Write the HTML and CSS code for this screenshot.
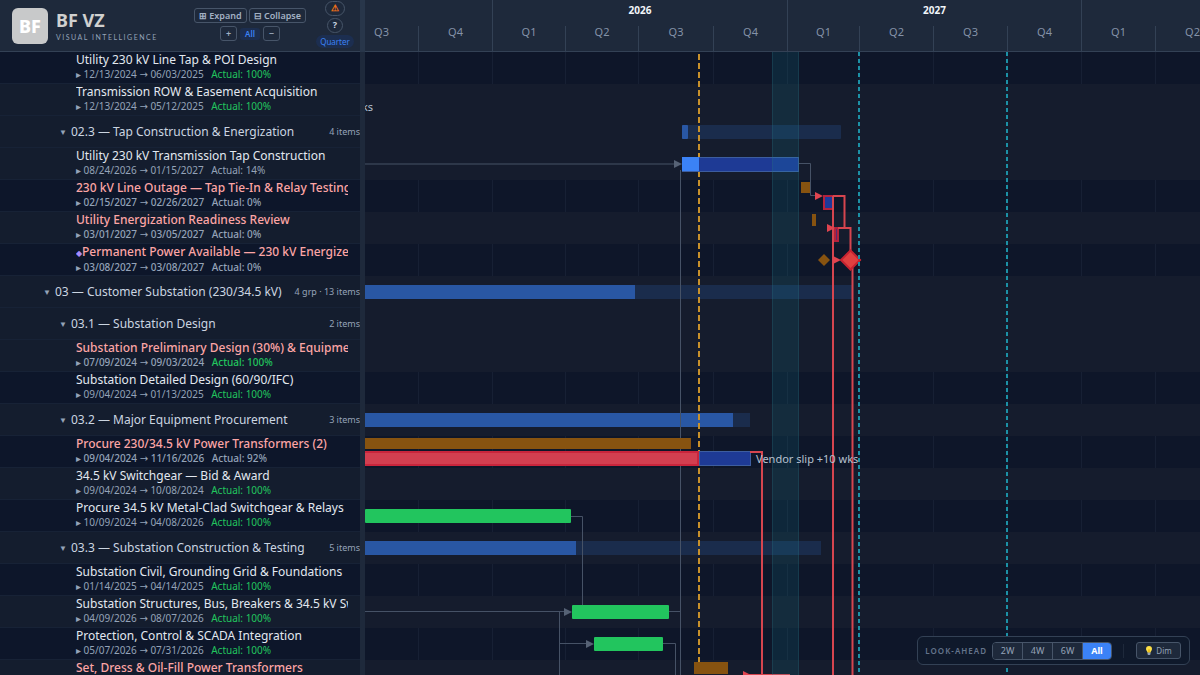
FILE: index.html
```html
<!DOCTYPE html>
<html lang="en">
<head>
<meta charset="utf-8">
<title>BF VZ</title>
<link rel="stylesheet" href="styles.css">
</head>
<body>
<div class="app">
  <aside class="sidebar">
    <header class="brand-bar">
      <div class="logo">BF</div>
      <div class="brand">
        <div class="brand-name">BF VZ</div>
        <div class="brand-tag">VISUAL INTELLIGENCE</div>
      </div>
      <div class="tree-tools">
        <div class="tool-line">
          <button class="tool">⊞ Expand</button>
          <button class="tool">⊟ Collapse</button>
        </div>
        <div class="tool-line steps">
          <button class="tool step">+</button>
          <span class="level">All</span>
          <button class="tool step">−</button>
        </div>
      </div>
      <div class="view-tools">
        <button class="round warn" aria-label="Warnings">⚠</button>
        <button class="round help">?</button>
        <button class="zoom-level">Quarter</button>
      </div>
    </header>
    <div class="rows">
      <div class="row"><div class="title">Utility 230 kV Line Tap &amp; POI Design</div><div class="dates">▸ 12/13/2024 <span class="to">→</span> 06/03/2025 <span class="actual done">Actual: 100%</span></div></div>
      <div class="row alt"><div class="title">Transmission ROW &amp; Easement Acquisition</div><div class="dates">▸ 12/13/2024 <span class="to">→</span> 05/12/2025 <span class="actual done">Actual: 100%</span></div></div>
      <div class="row alt group sub"><span class="caret">▼</span><span class="name">02.3 — Tap Construction &amp; Energization</span><span class="count">4 items</span></div>
      <div class="row alt"><div class="title">Utility 230 kV Transmission Tap Construction</div><div class="dates">▸ 08/24/2026 <span class="to">→</span> 01/15/2027 <span class="actual">Actual: 14%</span></div></div>
      <div class="row critical"><div class="title">230 kV Line Outage — Tap Tie-In &amp; Relay Testing</div><div class="dates">▸ 02/15/2027 <span class="to">→</span> 02/26/2027 <span class="actual">Actual: 0%</span></div></div>
      <div class="row alt critical"><div class="title">Utility Energization Readiness Review</div><div class="dates">▸ 03/01/2027 <span class="to">→</span> 03/05/2027 <span class="actual">Actual: 0%</span></div></div>
      <div class="row critical"><div class="title"><span class="milestone">◆</span>Permanent Power Available — 230 kV Energized</div><div class="dates">▸ 03/08/2027 <span class="to">→</span> 03/08/2027 <span class="actual">Actual: 0%</span></div></div>
      <div class="row alt group"><span class="caret">▼</span><span class="name">03 — Customer Substation (230/34.5 kV)</span><span class="count">4 grp · 13 items</span></div>
      <div class="row alt group sub"><span class="caret">▼</span><span class="name">03.1 — Substation Design</span><span class="count">2 items</span></div>
      <div class="row alt critical"><div class="title">Substation Preliminary Design (30%) &amp; Equipment</div><div class="dates">▸ 07/09/2024 <span class="to">→</span> 09/03/2024 <span class="actual done">Actual: 100%</span></div></div>
      <div class="row"><div class="title">Substation Detailed Design (60/90/IFC)</div><div class="dates">▸ 09/04/2024 <span class="to">→</span> 01/13/2025 <span class="actual done">Actual: 100%</span></div></div>
      <div class="row alt group sub"><span class="caret">▼</span><span class="name">03.2 — Major Equipment Procurement</span><span class="count">3 items</span></div>
      <div class="row critical"><div class="title">Procure 230/34.5 kV Power Transformers (2)</div><div class="dates">▸ 09/04/2024 <span class="to">→</span> 11/16/2026 <span class="actual">Actual: 92%</span></div></div>
      <div class="row alt"><div class="title">34.5 kV Switchgear — Bid &amp; Award</div><div class="dates">▸ 09/04/2024 <span class="to">→</span> 10/08/2024 <span class="actual done">Actual: 100%</span></div></div>
      <div class="row"><div class="title">Procure 34.5 kV Metal-Clad Switchgear &amp; Relays</div><div class="dates">▸ 10/09/2024 <span class="to">→</span> 04/08/2026 <span class="actual done">Actual: 100%</span></div></div>
      <div class="row alt group sub"><span class="caret">▼</span><span class="name">03.3 — Substation Construction &amp; Testing</span><span class="count">5 items</span></div>
      <div class="row"><div class="title">Substation Civil, Grounding Grid &amp; Foundations</div><div class="dates">▸ 01/14/2025 <span class="to">→</span> 04/14/2025 <span class="actual done">Actual: 100%</span></div></div>
      <div class="row alt"><div class="title">Substation Structures, Bus, Breakers &amp; 34.5 kV Switchgear</div><div class="dates">▸ 04/09/2026 <span class="to">→</span> 08/07/2026 <span class="actual done">Actual: 100%</span></div></div>
      <div class="row"><div class="title">Protection, Control &amp; SCADA Integration</div><div class="dates">▸ 05/07/2026 <span class="to">→</span> 07/31/2026 <span class="actual done">Actual: 100%</span></div></div>
      <div class="row alt critical"><div class="title">Set, Dress &amp; Oil-Fill Power Transformers</div></div>
    </div>
  </aside>
  <div class="splitter"></div>
  <main class="timeline">
    <header class="scale">
      <div class="years">
        <div class="y25"></div><div class="y26">2026</div><div class="y27">2027</div><div class="y28"></div>
      </div>
      <div class="quarters">
        <div>Q3</div><div class="year-end">Q4</div><div>Q1</div><div>Q2</div><div>Q3</div><div class="year-end">Q4</div><div>Q1</div><div>Q2</div><div>Q3</div><div class="year-end">Q4</div><div>Q1</div><div>Q2</div>
      </div>
    </header>
    <svg class="chart">
      <g transform="translate(-365 -52)">
        <path class="grid" d="M418.5 52V700M492.5 52V700M565.5 52V700M638.5 52V700M713.5 52V700M787.5 52V700M859.5 52V700M933.5 52V700M1007.5 52V700M1081.5 52V700M1155.5 52V700"/>
        <g class="stripe">
          <rect x="365" y="84" width="100%" height="96"/>
          <rect x="365" y="212" width="100%" height="32"/>
          <rect x="365" y="276" width="100%" height="96"/>
          <rect x="365" y="404" width="100%" height="32"/>
          <rect x="365" y="468" width="100%" height="32"/>
          <rect x="365" y="532" width="100%" height="32"/>
          <rect x="365" y="596" width="100%" height="32"/>
          <rect x="365" y="660" width="100%" height="32"/>
        </g>
        <g class="summary">
          <rect x="682" y="125" width="159" height="14" rx="1"/>
          <rect x="365" y="285" width="488" height="14"/>
          <rect x="365" y="413" width="385" height="14"/>
          <rect x="365" y="541" width="456" height="14"/>
        </g>
        <g class="summary-done">
          <rect x="682" y="125" width="6" height="14" rx="1"/>
          <rect x="365" y="285" width="270" height="14"/>
          <rect x="365" y="413" width="368" height="14"/>
          <rect x="365" y="541" width="211" height="14"/>
        </g>
        <path class="link" d="M365 164H674M680.500 170V700M799 163.500H810.500V195.500H816M571 516.500H582.500V605M365 611.500H565M559.500 700V611.500M559.500 643.500H588M668 611.500H680.500M663 643.500H675.500V700"/>
        <path class="link-head" d="M674 160l8 4-8 4zM564 608l8 4-8 4zM586 640l8 4-8 4z"/>
        <path class="today" d="M699 54V700"/>
        <g class="baseline">
          <rect x="801" y="182" width="9" height="11"/>
          <rect x="812" y="214" width="4" height="12"/>
          <path d="M824 254l6 6-6 6-6-6z"/>
          <rect x="365" y="438" width="326" height="11"/>
          <rect x="694" y="662" width="34" height="12"/>
        </g>
        <rect class="task" x="682.500" y="157.500" width="116" height="14"/>
        <rect class="task-done" x="682" y="157" width="17" height="14"/>
        <rect class="task" x="699.500" y="451.500" width="51" height="14"/>
        <rect class="critical-done" x="355" y="452" width="343" height="13"/>
        <g class="finished">
          <rect x="365" y="509" width="206" height="14" rx="1"/>
          <rect x="572" y="605" width="97" height="14" rx="1"/>
          <rect x="594" y="637" width="69" height="14" rx="1"/>
        </g>
        <rect class="critical-task" x="824" y="196" width="9" height="13"/>
        <rect class="critical-task short" x="835" y="228" width="3" height="13"/>
        <path class="critical-link" d="M833 196H844.500V228H838M838 228H850.500V252M833 196V700M852.500 268V700M750 452H762V700M745 675H790"/>
        <path class="critical-head" d="M815 192l8 4-8 4zM827 224l8 4-8 4zM833 256l8 4-8 4zM743 671l8 4-8 4zM858 257l3 3-3 3z"/>
        <path class="critical-milestone" d="M850.500 250.500l9.500 9.500-9.500 9.500-9.500-9.500z"/>
        <rect class="band" x="772" y="52" width="27" height="660"/>
        <path class="band-edge" d="M772.500 52V700M798.500 52V700"/>
        <path class="deadline" d="M859 52V700M1007 52V700"/>
        <text class="note" x="362" y="111">ks</text>
        <text class="note" x="756" y="463">Vendor slip +10 wks</text>
      </g>
    </svg>
  </main>
  <div class="lookahead">
    <span class="lookahead-label">LOOK-AHEAD</span>
    <div class="segments">
      <button>2W</button><button>4W</button><button>6W</button><button class="active">All</button>
    </div>
    <span class="divider"></span>
    <button class="dim"><svg class="bulb" viewBox="0 0 10 12"><path d="M5 0a4 4 0 0 0-4 4c0 2 2 3 2 5h4c0-2 2-3 2-5a4 4 0 0 0-4-4z" fill="#fde047"/><path d="M4 4l1 1 1-1v4H4z" fill="#eab308"/><path d="M3 9h4v2L6 12H4L3 11z" fill="#94a3b8"/></svg>Dim</button>
  </div>
</div>
</body>
</html>
```
FILE: styles.css
```css
* { box-sizing: border-box; }

body {
  margin: 0;
  background: #0e1629;
  color: #e2e8f0;
  font-family: "Noto Sans", "Open Sans", sans-serif;
}

button {
  margin: 0;
  padding: 0;
  font-family: inherit;
  cursor: pointer;
}

.app {
  position: relative;
  display: flex;
  height: 100vh;
  overflow: hidden;
}

.sidebar {
  flex: none;
  width: 360px;
  background: #0d162a;
}

.splitter {
  flex: none;
  width: 5px;
  background: linear-gradient(#28364a 52px, #1e293b 52px);
}

.timeline {
  flex: 1;
  min-width: 0;
  display: flex;
  flex-direction: column;
}

/* Brand bar */
.brand-bar {
  display: flex;
  align-items: center;
  height: 52px;
  padding-left: 12px;
  background: #1e293b;
  border-bottom: 1px solid #334155;
}

.logo {
  display: grid;
  place-items: center;
  width: 36px;
  height: 36px;
  border-radius: 6px;
  background: #c8c9ca;
  color: #fff;
  font-size: 18px;
  font-weight: 800;
}

.brand { flex: 1; padding-left: 8px; }

.brand-name {
  color: #d0d0cf;
  font-size: 18px;
  font-weight: 700;
  line-height: 22px;
}

.brand-tag {
  color: #94a3b8;
  font-family: Lato, sans-serif;
  font-size: 7px;
  letter-spacing: 1.5px;
  line-height: 12px;
}

.tree-tools {
  display: flex;
  flex-direction: column;
  align-items: center;
  gap: 3px;
  padding-bottom: 2px;
}

.tool-line { display: flex; align-items: center; gap: 2px; }
.steps { gap: 3px; }

.tool {
  height: 15px;
  padding: 0 4px;
  border: 1px solid #475569;
  border-radius: 3px;
  background: #1e293b;
  color: #a3b1c4;
  font-size: 9px;
  font-weight: 600;
  line-height: 12px;
}

.tool.step { width: 17px; padding: 0; }

.level {
  padding: 0 5px;
  border-radius: 3px;
  background: #1c2e50;
  color: #3b82f6;
  font-size: 8px;
  font-weight: 600;
  line-height: 12px;
}

.view-tools {
  display: flex;
  flex-direction: column;
  align-items: center;
  gap: 2px;
  width: 40px;
  padding-bottom: 3px;
  margin: 0 5px 0 9px;
}

.round {
  height: 15px;
  border: 1px solid #475569;
  border-radius: 8px;
  background: #1e293b;
  font-size: 9px;
  font-weight: 700;
  line-height: 12px;
}

.warn { width: 20px; color: #f97316; }
.help { width: 16px; color: #cbd5e1; }

.zoom-level {
  padding: 0 4px;
  border: 0;
  border-radius: 7px;
  background: #1c2e50;
  color: #3b82f6;
  font-size: 8px;
  line-height: 13px;
}

/* Task rows */
.row {
  height: 32px;
  padding: 0 12px 0 76px;
  border-bottom: 1px solid #172236;
}

.row.alt { background: #141d2e; }

.title {
  overflow: hidden;
  font-size: 12px;
  line-height: 16px;
  white-space: nowrap;
}

.dates {
  color: #94a3b8;
  font-size: 10px;
  line-height: 12px;
  white-space: nowrap;
}

.to { font-family: "DejaVu Sans", sans-serif; }
.actual { margin-left: 5px; }
.done { color: #22c55e; }

.critical .title { color: #fca5a5; font-weight: 500; }
.critical .dates { font-weight: 500; }

.milestone { color: #a78bfa; font-size: 8px; }

.group {
  display: flex;
  align-items: center;
  padding: 0 0 0 43px;
  color: #cbd5e1;
  white-space: nowrap;
}

.group.sub { padding-left: 59px; }

.caret { width: 12px; color: #94a3b8; font-size: 8px; }
.name { flex: 1; font-size: 12px; }
.count { color: #94a3b8; font-size: 9px; }

/* Time scale */
.scale {
  flex: none;
  height: 52px;
  overflow: hidden;
  background: #1e293b;
  border-bottom: 1px solid #334155;
}

.years, .quarters {
  display: grid;
  margin-left: -20px;
  text-align: center;
}

.years {
  grid-template-columns: 148px 295px 294px 295px;
  height: 26px;
  color: #f1f5f9;
  font-size: 10px;
  font-weight: 700;
  line-height: 21px;
}

.quarters {
  grid-template-columns: 74px 74px 73px 73px 75px 74px 72px 74px 74px 74px 74px 74px;
  height: 25px;
  color: #8492a8;
  font-size: 11px;
  line-height: 12px;
}

.years div, .year-end { border-right: 1px solid #334155; }
.quarters div { border-right: 1px solid #334155; }

/* Gantt drawing */
.chart { flex: 1; width: 100%; min-height: 0; display: block; }
.grid { fill: none; stroke: #172034; }
.stripe { fill: #151c2d; }
.summary { fill: #1a2c4c; }
.summary-done { fill: #2957a4; }
.baseline { fill: #875310; }
.today { fill: none; stroke: #c8912b; stroke-width: 2; stroke-dasharray: 6 3; }
.link { fill: none; stroke: #465266; }
.link-head { fill: #566275; }
.task { fill: #1e3a95; stroke: #3d5d9f; }
.task-done { fill: #3b82f6; }
.finished { fill: #22c55e; }
.critical-done { fill: #d23f50; stroke: #c9253c; stroke-width: 2; }
.critical-task { fill: #1e3a9a; stroke: #b3223c; stroke-width: 2; }
.critical-task.short { fill: #5b2a70; }
.critical-link { fill: none; stroke: #d6454f; stroke-width: 2; }
.critical-head { fill: #e0444f; }
.critical-milestone { fill: #e04040; stroke: #c52331; stroke-width: 2; }
.band { fill: #0ea5b9; fill-opacity: 0.12; }
.band-edge { fill: none; stroke: #2a6b7a; stroke-opacity: 0.3; }
.deadline { fill: none; stroke: #1c91a6; stroke-width: 2; stroke-dasharray: 4 3; }
.note { fill: #b6c1d0; font-size: 11px; }

/* Floating look-ahead filter */
.lookahead {
  position: absolute;
  right: 10px;
  bottom: 10px;
  display: flex;
  align-items: center;
  height: 29px;
  padding: 0 8px 0 7px;
  border: 1px solid #334155;
  border-radius: 6px;
  background: #0f192b;
}

.lookahead-label {
  color: #64748b;
  font-size: 8px;
  font-weight: 600;
  letter-spacing: 1px;
}

.segments {
  display: flex;
  height: 18px;
  margin-left: 5px;
  overflow: hidden;
  border: 1px solid #475569;
  border-radius: 4px;
}

.segments button {
  width: 30px;
  border: 0;
  border-right: 1px solid #475569;
  background: #1e293b;
  color: #94a3b8;
  font-size: 9px;
}

.segments .active {
  width: 28px;
  border-right: 0;
  background: #3b82f6;
  color: #fff;
  font-weight: 700;
}

.divider {
  width: 1px;
  height: 14px;
  margin: 0 12px 0 11px;
  background: #1e293b;
}

.dim {
  display: flex;
  align-items: center;
  justify-content: center;
  gap: 3px;
  width: 45px;
  height: 17px;
  border: 1px solid #475569;
  border-radius: 3px;
  background: #1e293b;
  color: #94a3b8;
  font-size: 8px;
}

.bulb { width: 8px; height: 9px; }
```
